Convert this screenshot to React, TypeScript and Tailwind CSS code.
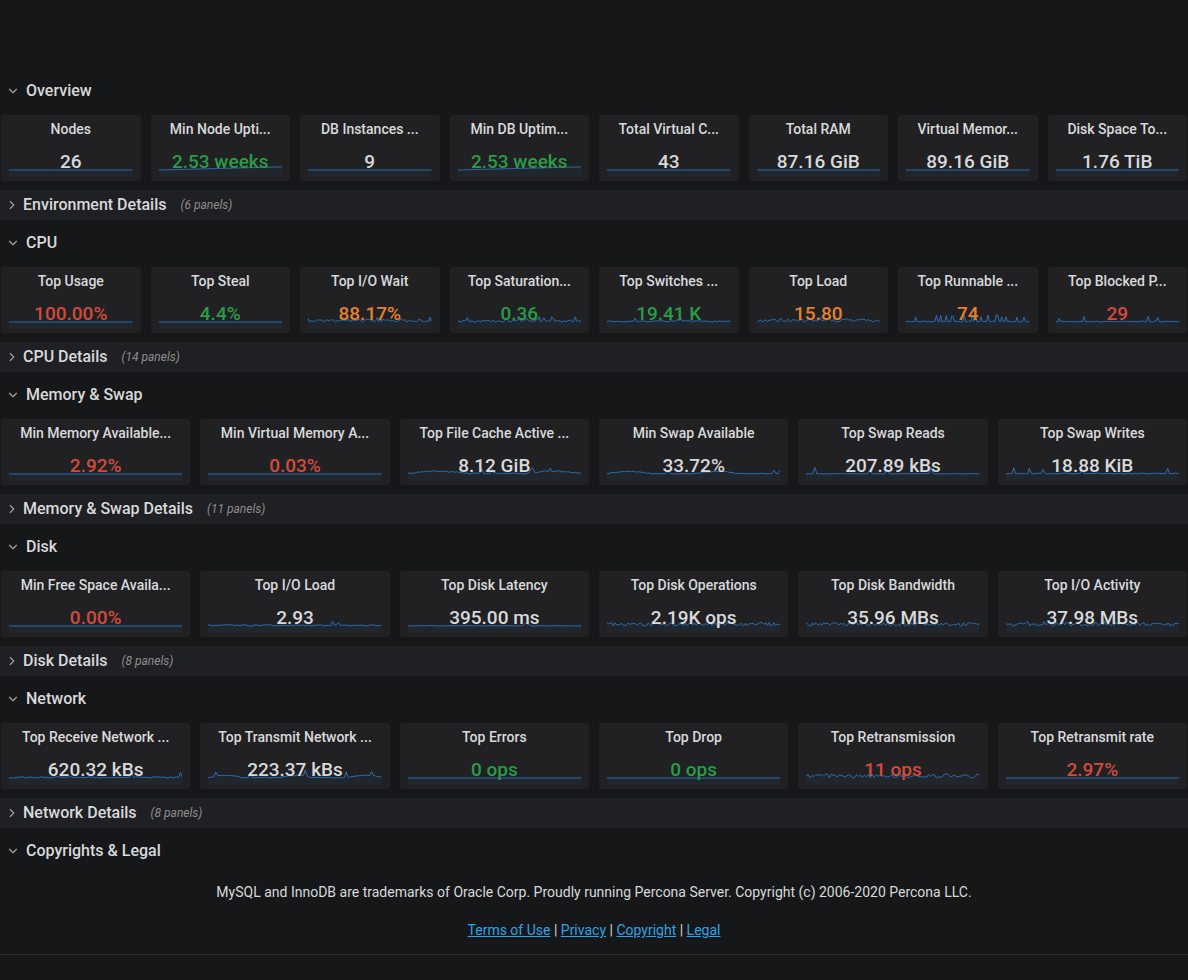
import React from "react";
import { ChevronDown, ChevronRight } from "lucide-react";

type Kind = "flat" | "rise" | "noise";
type Spark = { kind: Kind; seed?: number; amp?: number; spikes?: number; spikeH?: number; n?: number; bumps?: number };
type Color = "w" | "g" | "r" | "o";
type P = { t: string; v: string; c: Color; s: Spark };

function rng(seed: number) {
  let a = seed >>> 0;
  return () => {
    a = (a + 0x6d2b79f5) >>> 0;
    let t = a;
    t = Math.imul(t ^ (t >>> 15), t | 1);
    t ^= t + Math.imul(t ^ (t >>> 7), t | 61);
    return ((t ^ (t >>> 14)) >>> 0) / 4294967296;
  };
}

function series(s: Spark): number[] {
  const n = s.n ?? 70;
  if (s.kind === "flat") return Array.from({ length: n }, () => 0);
  if (s.kind === "rise") return Array.from({ length: n }, (_, i) => (i / (n - 1)) * 0.35);
  const r = rng(s.seed ?? 1);
  const amp = s.amp ?? 0.15;
  const sp = s.spikes ?? 0.05;
  const sh = s.spikeH ?? 0.7;
  const out: number[] = [];
  for (let i = 0; i < n; i++) {
    let v = r() * amp;
    if (r() < sp) v += sh * (0.5 + r() * 0.5);
    if (s.bumps) v += Math.max(0, Math.sin((i / n) * Math.PI * s.bumps)) * 0.25;
    out.push(v);
  }
  return out;
}

function Sparkline({ s }: { s: Spark }) {
  const d = series(s);
  const n = d.length;
  const pts = d.map((v, i) => `${((i / (n - 1)) * 100).toFixed(2)},${(14 - v * 9).toFixed(2)}`);
  const line = "M" + pts.join(" L");
  const area = line + " L100,20 L0,20 Z";
  return (
    <svg className="absolute left-2 right-2 bottom-[5px] h-[20px] w-[calc(100%-16px)]" viewBox="0 0 100 20" preserveAspectRatio="none">
      <path d={area} fill="rgba(31,120,193,0.05)" stroke="none" />
      <path d={line} fill="none" stroke="#2a6fb3" strokeWidth={1} vectorEffect="non-scaling-stroke" />
    </svg>
  );
}

const colorCls: Record<Color, string> = {
  w: "text-[#d8d9da]",
  g: "text-[#299c46]",
  r: "text-[#d44a3a]",
  o: "text-[#e5812e]",
};

function Panel({ p }: { p: P }) {
  return (
    <div className="relative h-[66px] rounded-[3px] bg-[#212124] overflow-hidden">
      <div className="h-[28px] pt-[1px] flex items-center justify-center text-[14px] font-medium text-[#d8d9da] whitespace-nowrap">
        {p.t}
      </div>
      <Sparkline s={p.s} />
      <div className={`relative mt-[7px] text-center text-[19px] leading-[24px] font-medium whitespace-nowrap ${colorCls[p.c]}`}>
        {p.v}
      </div>
    </div>
  );
}

function RowHeader({ title }: { title: string }) {
  return (
    <div className="h-[30px] pt-[2px] flex items-center pl-[6px]">
      <ChevronDown size={14} strokeWidth={2} className="text-[#9fa0a3]" />
      <span className="ml-[6px] text-[16px] font-medium text-[#d8d9da]">{title}</span>
    </div>
  );
}

function Collapsed({ title, count }: { title: string; count: number }) {
  return (
    <div className="h-[30px] flex items-center pl-[5px] bg-[#1f2023]">
      <ChevronRight size={14} strokeWidth={2} className="text-[#9fa0a3]" />
      <span className="ml-[4px] text-[16px] font-medium text-[#d8d9da]">{title}</span>
      <span className="ml-[14px] text-[12px] italic text-[#8e8e8e]">({count} panels)</span>
    </div>
  );
}

const F: Spark = { kind: "flat" };

const sections: { title: string; details?: string; count?: number; cols: 6 | 8; panels: P[] }[] = [
  {
    title: "Overview",
    details: "Environment Details",
    count: 6,
    cols: 8,
    panels: [
      { t: "Nodes", v: "26", c: "w", s: F },
      { t: "Min Node Upti...", v: "2.53 weeks", c: "g", s: { kind: "rise" } },
      { t: "DB Instances ...", v: "9", c: "w", s: F },
      { t: "Min DB Uptim...", v: "2.53 weeks", c: "g", s: { kind: "rise" } },
      { t: "Total Virtual C...", v: "43", c: "w", s: F },
      { t: "Total RAM", v: "87.16 GiB", c: "w", s: F },
      { t: "Virtual Memor...", v: "89.16 GiB", c: "w", s: F },
      { t: "Disk Space To...", v: "1.76 TiB", c: "w", s: F },
    ],
  },
  {
    title: "CPU",
    details: "CPU Details",
    count: 14,
    cols: 8,
    panels: [
      { t: "Top Usage", v: "100.00%", c: "r", s: F },
      { t: "Top Steal", v: "4.4%", c: "g", s: F },
      { t: "Top I/O Wait", v: "88.17%", c: "o", s: { kind: "noise", seed: 3, amp: 0.3, spikes: 0.05, spikeH: 0.3, n: 90 } },
      { t: "Top Saturation...", v: "0.36", c: "g", s: { kind: "noise", seed: 5, amp: 0.2, spikes: 0.12, spikeH: 0.5, n: 80 } },
      { t: "Top Switches ...", v: "19.41 K", c: "g", s: { kind: "noise", seed: 7, amp: 0.15, spikes: 0.06, spikeH: 0.5, n: 80 } },
      { t: "Top Load", v: "15.80", c: "o", s: { kind: "noise", seed: 9, amp: 0.35, spikes: 0.08, spikeH: 0.3, n: 80 } },
      { t: "Top Runnable ...", v: "74", c: "o", s: { kind: "noise", seed: 11, amp: 0.12, spikes: 0.2, spikeH: 0.8, n: 90 } },
      { t: "Top Blocked P...", v: "29", c: "r", s: { kind: "noise", seed: 13, amp: 0.1, spikes: 0.03, spikeH: 0.7, n: 80 } },
    ],
  },
  {
    title: "Memory & Swap",
    details: "Memory & Swap Details",
    count: 11,
    cols: 6,
    panels: [
      { t: "Min Memory Available...", v: "2.92%", c: "r", s: F },
      { t: "Min Virtual Memory A...", v: "0.03%", c: "r", s: F },
      { t: "Top File Cache Active ...", v: "8.12 GiB", c: "w", s: { kind: "noise", seed: 17, amp: 0.15, spikes: 0.04, spikeH: 0.5, bumps: 3, n: 90 } },
      { t: "Min Swap Available", v: "33.72%", c: "w", s: { kind: "noise", seed: 19, amp: 0.08, spikes: 0.03, spikeH: 0.4, bumps: 4, n: 80 } },
      { t: "Top Swap Reads", v: "207.89 kBs", c: "w", s: { kind: "noise", seed: 23, amp: 0.05, spikes: 0.04, spikeH: 0.8, n: 80 } },
      { t: "Top Swap Writes", v: "18.88 KiB", c: "w", s: { kind: "noise", seed: 29, amp: 0.1, spikes: 0.1, spikeH: 0.8, n: 90 } },
    ],
  },
  {
    title: "Disk",
    details: "Disk Details",
    count: 8,
    cols: 6,
    panels: [
      { t: "Min Free Space Availa...", v: "0.00%", c: "r", s: F },
      { t: "Top I/O Load", v: "2.93", c: "w", s: { kind: "noise", seed: 31, amp: 0.15, spikes: 0.03, spikeH: 0.6, n: 90 } },
      { t: "Top Disk Latency", v: "395.00 ms", c: "w", s: { kind: "noise", seed: 37, amp: 0.05, spikes: 0.02, spikeH: 0.3, n: 60 } },
      { t: "Top Disk Operations", v: "2.19K ops", c: "w", s: { kind: "noise", seed: 41, amp: 0.4, spikes: 0.05, spikeH: 0.2, n: 110 } },
      { t: "Top Disk Bandwidth", v: "35.96 MBs", c: "w", s: { kind: "noise", seed: 43, amp: 0.4, spikes: 0.05, spikeH: 0.2, n: 110 } },
      { t: "Top I/O Activity", v: "37.98 MBs", c: "w", s: { kind: "noise", seed: 47, amp: 0.4, spikes: 0.05, spikeH: 0.2, n: 110 } },
    ],
  },
  {
    title: "Network",
    details: "Network Details",
    count: 8,
    cols: 6,
    panels: [
      { t: "Top Receive Network ...", v: "620.32 kBs", c: "w", s: { kind: "noise", seed: 53, amp: 0.15, spikes: 0.02, spikeH: 0.7, n: 90 } },
      { t: "Top Transmit Network ...", v: "223.37 kBs", c: "w", s: { kind: "noise", seed: 59, amp: 0.1, spikes: 0.06, spikeH: 0.7, bumps: 5, n: 90 } },
      { t: "Top Errors", v: "0 ops", c: "g", s: F },
      { t: "Top Drop", v: "0 ops", c: "g", s: F },
      { t: "Top Retransmission", v: "11 ops", c: "r", s: { kind: "noise", seed: 61, amp: 0.45, spikes: 0.05, spikeH: 0.3, n: 90 } },
      { t: "Top Retransmit rate", v: "2.97%", c: "r", s: F },
    ],
  },
];

export default function App() {
  return (
    <div className="min-h-[980px] w-full bg-[#161719] font-[Roboto,'Helvetica_Neue',Arial,sans-serif] pt-[75px]">
      {sections.map((sec, i) => (
        <div key={sec.title} className={i === 0 ? "" : "mt-[7px]"}>
          <RowHeader title={sec.title} />
          <div className={`mt-[10px] px-[1px] grid gap-x-[10px] ${sec.cols === 8 ? "grid-cols-8" : "grid-cols-6"}`}>
            {sec.panels.map((p, j) => (
              <Panel key={j} p={p} />
            ))}
          </div>
          <div className="mt-[9px]">
            <Collapsed title={sec.details!} count={sec.count!} />
          </div>
        </div>
      ))}
      <div className="mt-[7px]">
        <RowHeader title="Copyrights & Legal" />
      </div>
      <div className="mt-[17px] text-center text-[14px] leading-[20px] text-[#d8d9da]">
        MySQL and InnoDB are trademarks of Oracle Corp. Proudly running Percona Server. Copyright (c) 2006-2020 Percona LLC.
      </div>
      <div className="mt-[18px] text-center text-[14px] leading-[20px] text-[#d8d9da]">
        <a className="text-[#33a2e5] underline">Terms of Use</a> | <a className="text-[#33a2e5] underline">Privacy</a> |{" "}
        <a className="text-[#33a2e5] underline">Copyright</a> | <a className="text-[#33a2e5] underline">Legal</a>
      </div>
      <div className="mt-[14px] h-px bg-[#2c2d30]" />
    </div>
  );
}
